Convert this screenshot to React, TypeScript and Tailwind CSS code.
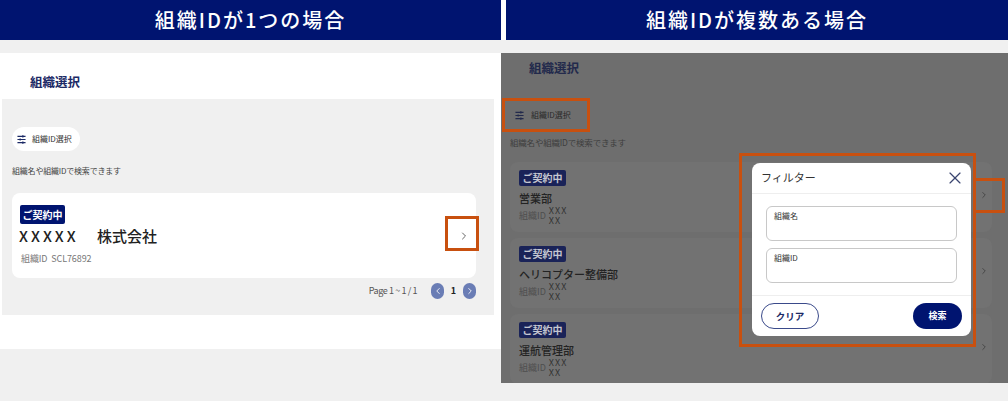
import { ChevronLeft, ChevronRight, X } from 'lucide-react';

const font = { fontFamily: '"Noto Sans CJK JP", "Noto Sans", sans-serif' };

const departments = [
    { name: '営業部' },
    { name: 'ヘリコプター整備部' },
    { name: '運航管理部' },
];

function FilterIcon({ className }: { className?: string }) {
    return (
        <svg viewBox="0 0 10 10" className={className} fill="none" stroke="currentColor" strokeWidth="1.2">
            <path d="M0.5 1.5h9M0.5 5h9M0.5 8.5h9" />
            <path d="M6.5 0.3v2.4M3.5 3.8v2.4M6.5 7.3v2.4" strokeWidth="1.4" />
        </svg>
    );
}

function SingleCase() {
    return (
        <div className="h-[296px] w-[501px] bg-white">
            <h2 className="pl-[30px] pt-[20px] text-[12.5px] font-bold leading-[18px] text-[#1c2a66]">組織選択</h2>
            <div className="ml-[2px] mt-[8px] h-[216px] w-[492px] bg-[#f0f0f0] pl-[10px] pr-[18px] pt-[28px]">
                <div className="flex h-[24px] w-[68px] items-center gap-[6px] rounded-full bg-white pl-[5px] text-[8px] leading-none text-[#333]">
                    <FilterIcon className="h-[9px] w-[9px] text-[#1c2a66]" />
                    組織ID選択
                </div>
                <p className="mt-[14px] text-[8px] tracking-[-0.2px] leading-[12px] text-[#444]">組織名や組織IDで検索できます</p>
                <div className="mt-[16px] flex h-[85px] w-[464px] items-center justify-between rounded-lg bg-white pl-[7px] pr-[6px]">
                    <div className="flex flex-col">
                        <div className="pl-[1px]">
                            <span className="flex h-[19px] w-[45px] items-center justify-center rounded-[2px] bg-[#001470] text-[10px] font-bold leading-none text-white">ご契約中</span>
                        </div>
                        <p className="mt-[2px] flex text-[15px] font-medium leading-[20px] text-[#222]">
                            <span className="w-[78px] tracking-[3px]">XXXXX</span>
                            <span>株式会社</span>
                        </p>
                        <p className="mt-[6px] pl-[2px] text-[9px] leading-[14px] tracking-[-0.1px] text-[#777]">組織ID&nbsp;&nbsp;SCL76892</p>
                    </div>
                    <ChevronRight className="h-3 w-3 text-[#666]" />
                </div>
                <div className="mt-[4px] flex h-[17px] w-[464px] items-center justify-end text-[9px] text-[#555]">
                    <span className="mr-[14px] tracking-[-0.4px]">Page 1 ~ 1 / 1</span>
                    <span className="flex h-[16px] w-[13px] items-center justify-center rounded-full bg-[#6a7db5] text-white">
                        <ChevronLeft className="h-[10px] w-[10px]" />
                    </span>
                    <span className="w-[19px] text-center font-bold text-[#222]">1</span>
                    <span className="flex h-[16px] w-[13px] items-center justify-center rounded-full bg-[#6a7db5] text-white">
                        <ChevronRight className="h-[10px] w-[10px]" />
                    </span>
                </div>
            </div>
        </div>
    );
}

function FilterModal() {
    return (
        <div className="absolute left-[251px] top-[110px] flex h-[173px] w-[219px] flex-col rounded-lg bg-white">
            <div className="flex h-[31px] items-center justify-between border-b border-[#eee] pb-[1px] pl-[9px] pr-[6px]">
                <span className="text-[11px] text-[#333]">フィルター</span>
                <X className="h-[20px] w-[20px] text-[#3a4570]" strokeWidth={1.4} />
            </div>
            <div className="flex h-[102px] flex-col gap-[7px] border-b border-[#eee] px-[14px] pt-[12px]">
                <div className="h-[35px] rounded-md border-[1.5px] border-[#c8c8c8] px-[7px] pt-[3px] text-[8px] leading-[12px] text-[#333]">組織名</div>
                <div className="h-[35px] rounded-md border-[1.5px] border-[#c8c8c8] px-[7px] pt-[3px] text-[8px] leading-[12px] text-[#333]">組織ID</div>
            </div>
            <div className="flex flex-1 items-center justify-between px-[9px]">
                <span className="flex h-[26px] w-[58px] items-center justify-center rounded-full border border-[#3a4a8a] text-[9.5px] font-bold text-[#1c2a66]">クリア</span>
                <span className="flex h-[26px] w-[49px] items-center justify-center rounded-full bg-[#001470] text-[9px] font-bold text-white">検索</span>
            </div>
        </div>
    );
}

function MultipleCase() {
    return (
        <div className="relative h-[330px] w-[507px] overflow-hidden bg-[#6e6e6e]">
            <h2 className="pl-[28px] pt-[7px] text-[12.5px] font-bold leading-[15px] text-[#232a4c]">組織選択</h2>
            <div className="mt-[28px] flex h-[24px] items-center gap-[7px] pl-[14px] text-[8px] leading-none text-[#2a2a2a]">
                <FilterIcon className="h-[9px] w-[9px] text-[#232a4c]" />
                組織ID選択
            </div>
            <p className="mt-[9px] pl-[9px] text-[8.5px] leading-[12px] tracking-[-0.2px] text-[#3e3e3e]">組織名や組織IDで検索できます</p>
            <div className="ml-[9px] mt-[14px] flex flex-col gap-[6px]">
                {departments.map((dept) => (
                    <div key={dept.name} className="flex h-[70px] w-[482px] items-center justify-between rounded-lg bg-[#727272] pl-[9px] pr-[3px]">
                        <div className="flex h-full flex-col pt-[8px]">
                            <span className="flex h-[16px] w-[47px] items-center justify-center rounded-[2px] bg-[#1a2358] text-[10px] font-bold leading-none text-[#c4c6d0]">ご契約中</span>
                            <p className="mt-[4px] text-[11px] font-medium leading-[16px] text-[#232323]">{dept.name}</p>
                            <div className="flex items-center gap-[3px] text-[9px] leading-[10px] text-[#4e4e4e]">
                                <span>組織ID</span>
                                <span className="w-[23px] break-all tracking-[1px] text-[#333]">XXXXX</span>
                            </div>
                        </div>
                        <ChevronRight className="mb-[4px] h-[10px] w-[10px] text-[#3e3e3e]" />
                    </div>
                ))}
            </div>

            <FilterModal />

            {/* 注釈の枠 */}
            <div className="absolute left-[1px] top-[45px] h-[34px] w-[88px] border-[3px] border-[#c8500f]" />
            <div className="absolute left-[238px] top-[100px] h-[194px] w-[237px] border-[3px] border-[#c8500f]" />
            <div className="absolute left-[474px] top-[125px] h-[35px] w-[30px] border-[3px] border-l-0 border-[#c8500f]" />
        </div>
    );
}

export default function App() {
    return (
        <div style={font} className="h-[401px] w-[1008px] overflow-hidden bg-[#f0f0f0]">
            {/* Header */}
            <div className="flex h-10 bg-white text-[20px] font-medium tracking-[2px] text-white">
                <div className="flex w-[501px] items-center justify-center bg-[#001470]">組織IDが1つの場合</div>
                <div className="ml-[5px] flex flex-1 items-center justify-center bg-[#001470]">組織IDが複数ある場合</div>
            </div>

            {/* Panels */}
            <div className="relative flex items-start pt-[13px]">
                <SingleCase />
                <MultipleCase />
                <div className="absolute left-[445px] top-[176px] h-[35px] w-[34px] border-[3px] border-[#c8500f]" />
            </div>
        </div>
    );
}
